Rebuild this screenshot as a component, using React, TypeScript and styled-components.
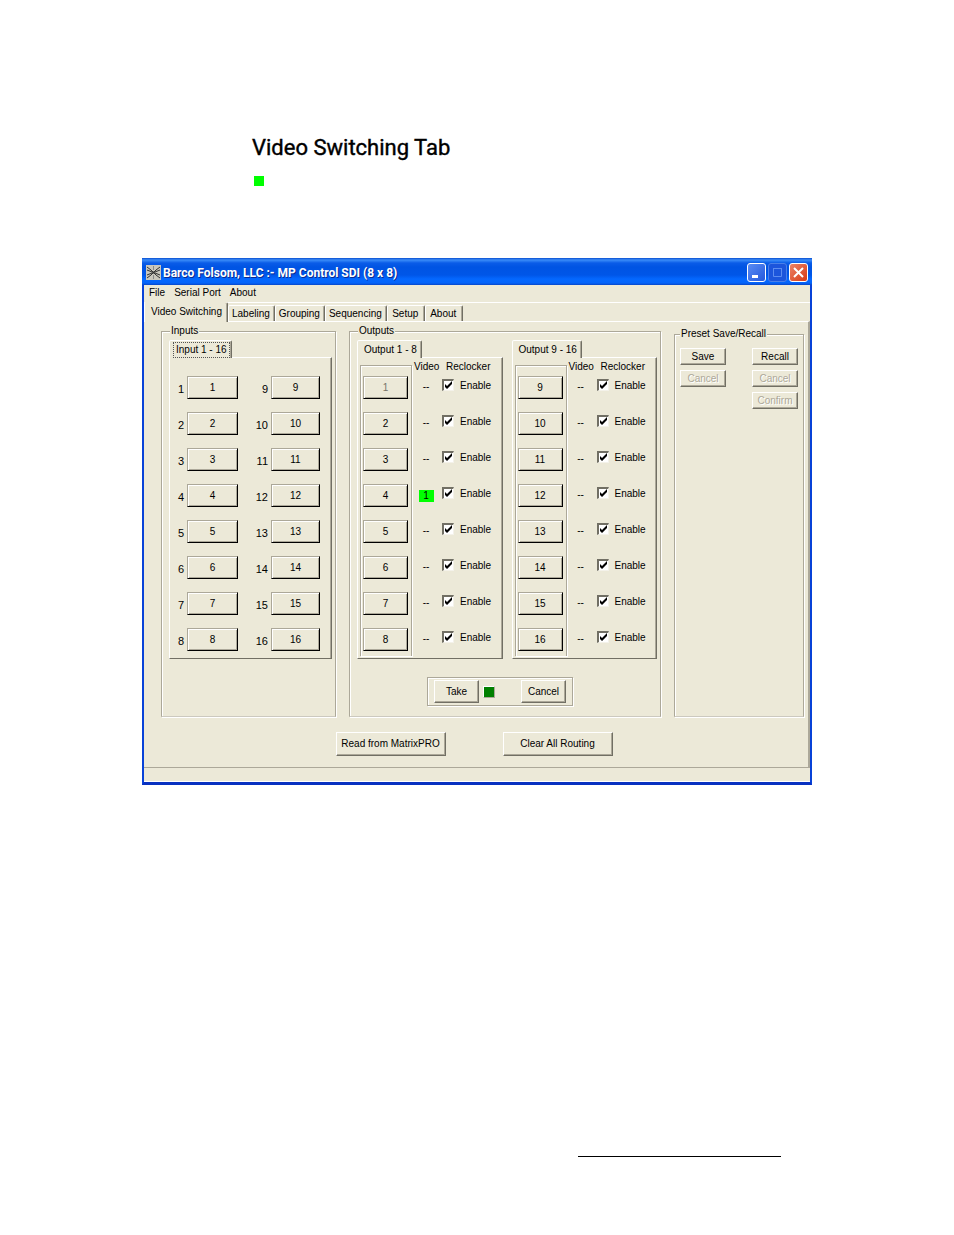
import React, { useState } from "react";
import styled, { createGlobalStyle, css } from "styled-components";

const face = "#ece9d8";
const shade = "#aca899";
const dark = "#716f64";

const GlobalStyle = createGlobalStyle`
  *, *::before, *::after { box-sizing: border-box; }
  body { margin: 0; background: #fff; color: #000; }
  button, input { font: inherit; color: inherit; }
`;

const Page = styled.main`
  padding: 134px 142px 78px;
  font: 10px/12px "Liberation Sans", Arial, sans-serif;
`;

const Heading = styled.h1`
  margin: 0 0 0 110px;
  font: 400 22px/28px Roboto, sans-serif;
  -webkit-text-stroke: 0.4px #000;
`;

const Marker = styled.div`
  width: 10px;
  height: 10px;
  margin: 14px 0 72px 112px;
  background: #00ff00;
`;

const Window = styled.section`
  min-width: 670px;
  border: solid #0842d8;
  border-width: 0 2px 3px;
  border-bottom-color: #0831c0;
  background: ${face};
`;

const TitleBar = styled.header`
  display: flex;
  align-items: center;
  gap: 2px;
  height: 27px;
  margin: 0 -2px;
  padding: 2px 4px 0;
  color: #fff;
  background: linear-gradient(#0a4ed0 0, #3a8cf8 2px, #0a5ce8 5px, #0054e3 9px, #0056e8 17px, #0468ff 21px, #0464fa 25px, #0846c8 27px);
`;

const Title = styled.h2`
  flex: 1;
  margin: 0;
  font: bold 12px/16px Roboto, sans-serif;
  text-shadow: 1px 1px #0a2a90;
`;

const Caption = styled.button<{ $tone: string; $dim?: boolean }>`
  width: 19px;
  height: 19px;
  padding: 0;
  border: 1px solid ${(p) => (p.$dim ? "#4a80e8" : "#fff")};
  border-radius: 3px;
  background: ${(p) => p.$tone};
  svg { display: block; width: 17px; height: 17px; }
`;

const MenuBar = styled.nav`
  display: flex;
  gap: 9px;
  height: 18px;
  padding: 0 5px 2px;
  border-bottom: 1px solid #fff;
`;

const MenuItem = styled.button`
  padding: 0;
  border: 0;
  background: none;
`;

const TabStrip = styled.div`
  display: flex;
  align-items: flex-end;
  height: 18px;
`;

const tabEdges = css`
  border: solid;
  border-width: 1px 1px 0 1px;
  border-color: #fff ${dark} transparent #fff;
  border-radius: 2px 2px 0 0;
  box-shadow: inset -1px 0 ${shade};
  background: ${face};
`;

const MainTab = styled.button<{ $on?: boolean }>`
  ${tabEdges}
  min-width: 38px;
  height: ${(p) => (p.$on ? 20 : 16)}px;
  margin-bottom: ${(p) => (p.$on ? -1 : 0)}px;
  padding: ${(p) => (p.$on ? "0 5px 2px 6px" : "0 4px 0 3px")};
  z-index: ${(p) => (p.$on ? 1 : 0)};
  border-top-color: ${(p) => (p.$on ? face : "#fff")};
`;

const Panel = styled.div`
  padding: 3px 4px 11px 17px;
  border: solid;
  border-width: 1px 2px 0 0;
  border-color: #fff ${shade} ${shade} #fff;
`;

const Groups = styled.div`
  display: grid;
  grid-template-columns: 175fr 312fr 130fr;
  column-gap: 13px;
`;

const etched = css`
  border: 1px solid ${shade};
  box-shadow: inset 1px 1px #fff, 1px 1px #fff;
`;

const Group = styled.fieldset<{ $low?: boolean }>`
  ${etched}
  border-bottom-color: #ccc9bf;
  min-width: 0;
  margin: ${(p) => (p.$low ? 3 : 0)}px 0 0;
  padding: ${(p) => (p.$low ? "8px 5px" : "3px 3px 10px 7px")};
  > legend {
    margin-left: ${(p) => (p.$low ? 0 : 1)}px;
    padding: 0 1px;
    background: ${face};
  }
`;

const SubTab = styled.button`
  ${tabEdges}
  display: block;
  height: 18px;
  margin-bottom: -1px;
  padding: 0 2px 0 4px;
  position: relative;
`;

const TabText = styled.span<{ $focus?: boolean }>`
  display: block;
  padding: 0 2px;
  line-height: 14px;
  outline: ${(p) => (p.$focus ? "1px dotted #555" : "none")};
`;

const SubPanel = styled.div`
  border: 1px solid;
  border-color: #fff ${dark} ${dark} #fff;
  box-shadow: inset -1px 0 ${shade};
  height: 302px;
`;

const InputGrid = styled(SubPanel)`
  display: grid;
  grid-template: repeat(8, 36px) / 14px 51px 27px 49px;
  justify-content: start;
  column-gap: 3px;
  padding-top: 18px;
`;

const Label = styled.label`
  padding-top: 6px;
  font-size: 11px;
  line-height: 14px;
  text-align: right;
`;

const Push = styled.button<{ $dim?: boolean }>`
  height: 23px;
  padding: 0;
  border: 1px solid;
  border-color: ${shade} #000 #000 ${shade};
  box-shadow: inset 1px 1px #fff, inset -1px -1px ${shade};
  background: ${face};
  color: ${(p) => (p.$dim ? "#77746a" : "#000")};
`;

const Columns = styled.div`
  display: grid;
  grid-template-columns: 1fr 1fr;
  column-gap: 9px;
`;

const OutputPanel = styled(SubPanel)`
  display: grid;
  grid-template-columns: 52px 1fr;
  padding: 7px 0 2px 2px;
`;

const ButtonColumn = styled.div`
  ${etched}
  border-bottom: 0;
  display: grid;
  grid-template-rows: repeat(7, 36px) 24px;
  padding: 10px 3px 0 2px;
`;

const StatusTable = styled.div`
  display: grid;
  grid-template: 13px repeat(7, 36px) 24px / 24px 1fr;
  column-gap: 4px;
  padding-left: 2px;
`;

const ColumnHead = styled.span`
  margin-top: -4px;
  &:nth-child(2) { padding-left: 4px; }
`;

const Routed = styled.output<{ $live?: boolean }>`
  justify-self: center;
  margin-top: ${(p) => (p.$live ? 4 : 3)}px;
  width: 15px;
  height: 12px;
  text-align: center;
  background: ${(p) => (p.$live ? "#00ff00" : "none")};
`;

const Enable = styled.label`
  display: flex;
  align-items: flex-start;
  gap: 6px;
  height: 13px;
  line-height: 13px;
  margin-top: 1px;
`;

const CheckBox = styled.span`
  display: grid;
  width: 12px;
  height: 12px;
  > * { grid-area: 1 / 1; }
  input {
    appearance: none;
    width: 12px;
    height: 12px;
    margin: 0;
    background: #fff;
    border: solid;
    border-width: 2px 1px 1px 2px;
    border-color: ${dark} #f4f2ea #f4f2ea ${dark};
  }
  svg { width: 12px; height: 12px; visibility: hidden; pointer-events: none; }
  input:checked + svg { visibility: visible; }
`;

const TakeBox = styled.div`
  ${etched}
  display: flex;
  align-items: center;
  width: 146px;
  height: 29px;
  margin: 18px 0 0 70px;
  padding: 0 6px;
`;

const Raised = styled.button<{ $w: number; $h: number }>`
  width: ${(p) => p.$w}px;
  height: ${(p) => p.$h}px;
  padding: 0;
  border: 1px solid;
  border-color: #fff ${dark} ${dark} #fff;
  box-shadow: inset -1px -1px ${shade};
  background: ${face};
  &:disabled {
    color: ${shade};
    text-shadow: 1px 1px #fff;
  }
`;

const Lamp = styled.span`
  width: 12px;
  height: 12px;
  margin: 0 auto 0 4px;
  background: #008000;
  border: 1px solid;
  border-color: #fff ${shade} ${shade} #fff;
`;

const Presets = styled.div`
  display: flex;
  justify-content: space-between;
`;

const Stack = styled.div`
  display: grid;
  gap: 5px;
  align-content: start;
`;

const Footer = styled.div`
  display: flex;
  justify-content: center;
  gap: 57px;
  padding: 15px 17px 0 0;
`;

const StatusBar = styled.footer`
  height: 15px;
  border-top: 1px solid ${shade};
  border-bottom: 1px solid #fff;
`;

const Rule = styled.hr`
  width: 203px;
  height: 1px;
  margin: 371px 31px 0 auto;
  border: 0;
  background: #000;
`;

const eight = [1, 2, 3, 4, 5, 6, 7, 8];

function AppIcon() {
  return (
    <svg width="15" height="15" viewBox="0 0 15 15" aria-hidden="true">
      <rect width="15" height="15" fill="#c9c7bd" />
      <path d="M1 2 L5 5 L10 10 L14 13 M1 13 L5 10 L10 5 L14 2 M1 5 L6 7 H9 L14 5 M1 10 L6 8 H9 L14 10" stroke="#333" fill="none" />
      <path d="M7.5 1V5M7.500 10V14" stroke="#888" />
    </svg>
  );
}

function Tick({ name }: { name: string }) {
  const [on, setOn] = useState(true);
  return (
    <Enable>
      <CheckBox>
        <input type="checkbox" name={name} checked={on} onChange={() => setOn(!on)} />
        <svg viewBox="0 0 12 12" aria-hidden="true">
          <path d="M3 5v3l2 2 5-5V2L5 7z" fill="#000" />
        </svg>
      </CheckBox>
      Enable
    </Enable>
  );
}

function OutputBank({ title, start, live, dimmed }: { title: string; start: number; live?: number; dimmed?: number }) {
  return (
    <div>
      <SubTab role="tab"><TabText>{title}</TabText></SubTab>
      <OutputPanel>
        <ButtonColumn>
          {eight.map((n) => (
            <Push key={n} $dim={n + start === dimmed}>{n + start}</Push>
          ))}
        </ButtonColumn>
        <StatusTable>
          <ColumnHead>Video</ColumnHead>
          <ColumnHead>Reclocker</ColumnHead>
          {eight.map((n) => (
            <React.Fragment key={n}>
              <Routed $live={n + start === live}>{n + start === live ? "1" : "--"}</Routed>
              <Tick name={`reclock-${n + start}`} />
            </React.Fragment>
          ))}
        </StatusTable>
      </OutputPanel>
    </div>
  );
}

export default function App() {
  return (
    <Page>
      <GlobalStyle />
      <Heading>Video Switching Tab</Heading>
      <Marker />
      <Window>
        <TitleBar>
          <AppIcon />
          <Title>Barco Folsom, LLC :- MP Control SDI (8 x 8)</Title>
          <Caption aria-label="Minimize" $tone="linear-gradient(135deg, #5a8cf4, #2458dc)">
            <svg viewBox="0 0 17 17"><path d="M4 12.5h6" stroke="#fff" strokeWidth="3" /></svg>
          </Caption>
          <Caption aria-label="Maximize" $dim $tone="#1c55dc">
            <svg viewBox="0 0 17 17"><path d="M4.500 4v8.500h8V4M4 4.500h9" stroke="#5c8cf0" fill="none" /></svg>
          </Caption>
          <Caption aria-label="Close" $tone="linear-gradient(135deg, #ec8468, #d83a14)">
            <svg viewBox="0 0 17 17"><path d="M4 4l9 9M13 4l-9 9" stroke="#fff" strokeWidth="2" /></svg>
          </Caption>
        </TitleBar>
        <MenuBar>
          {["File", "Serial Port", "About"].map((m) => <MenuItem key={m}>{m}</MenuItem>)}
        </MenuBar>
        <TabStrip role="tablist">
          {["Video Switching", "Labeling", "Grouping", "Sequencing", "Setup", "About"].map((t, i) => (
            <MainTab key={t} role="tab" $on={i === 0} aria-selected={i === 0}>{t}</MainTab>
          ))}
        </TabStrip>
        <Panel>
          <Groups>
            <Group>
              <legend>Inputs</legend>
              <SubTab role="tab"><TabText $focus>Input 1 - 16</TabText></SubTab>
              <InputGrid>
                {eight.map((n) => (
                  <React.Fragment key={n}>
                    <Label htmlFor={`in${n}`}>{n}</Label>
                    <Push id={`in${n}`}>{n}</Push>
                    <Label htmlFor={`in${n + 8}`}>{n + 8}</Label>
                    <Push id={`in${n + 8}`}>{n + 8}</Push>
                  </React.Fragment>
                ))}
              </InputGrid>
            </Group>
            <Group>
              <legend>Outputs</legend>
              <Columns>
                <OutputBank title="Output 1 - 8" start={0} live={4} dimmed={1} />
                <OutputBank title="Output 9 - 16" start={8} />
              </Columns>
              <TakeBox>
                <Raised $w={45} $h={23}>Take</Raised>
                <Lamp />
                <Raised $w={45} $h={23}>Cancel</Raised>
              </TakeBox>
            </Group>
            <Group $low>
              <legend>Preset Save/Recall</legend>
              <Presets>
                <Stack>
                  <Raised $w={46} $h={17}>Save</Raised>
                  <Raised $w={46} $h={17} disabled>Cancel</Raised>
                </Stack>
                <Stack>
                  <Raised $w={46} $h={17}>Recall</Raised>
                  <Raised $w={46} $h={17} disabled>Cancel</Raised>
                  <Raised $w={46} $h={17} disabled>Confirm</Raised>
                </Stack>
              </Presets>
            </Group>
          </Groups>
          <Footer>
            <Raised $w={110} $h={24}>Read from MatrixPRO</Raised>
            <Raised $w={110} $h={24}>Clear All Routing</Raised>
          </Footer>
        </Panel>
        <StatusBar />
      </Window>
      <Rule />
    </Page>
  );
}
